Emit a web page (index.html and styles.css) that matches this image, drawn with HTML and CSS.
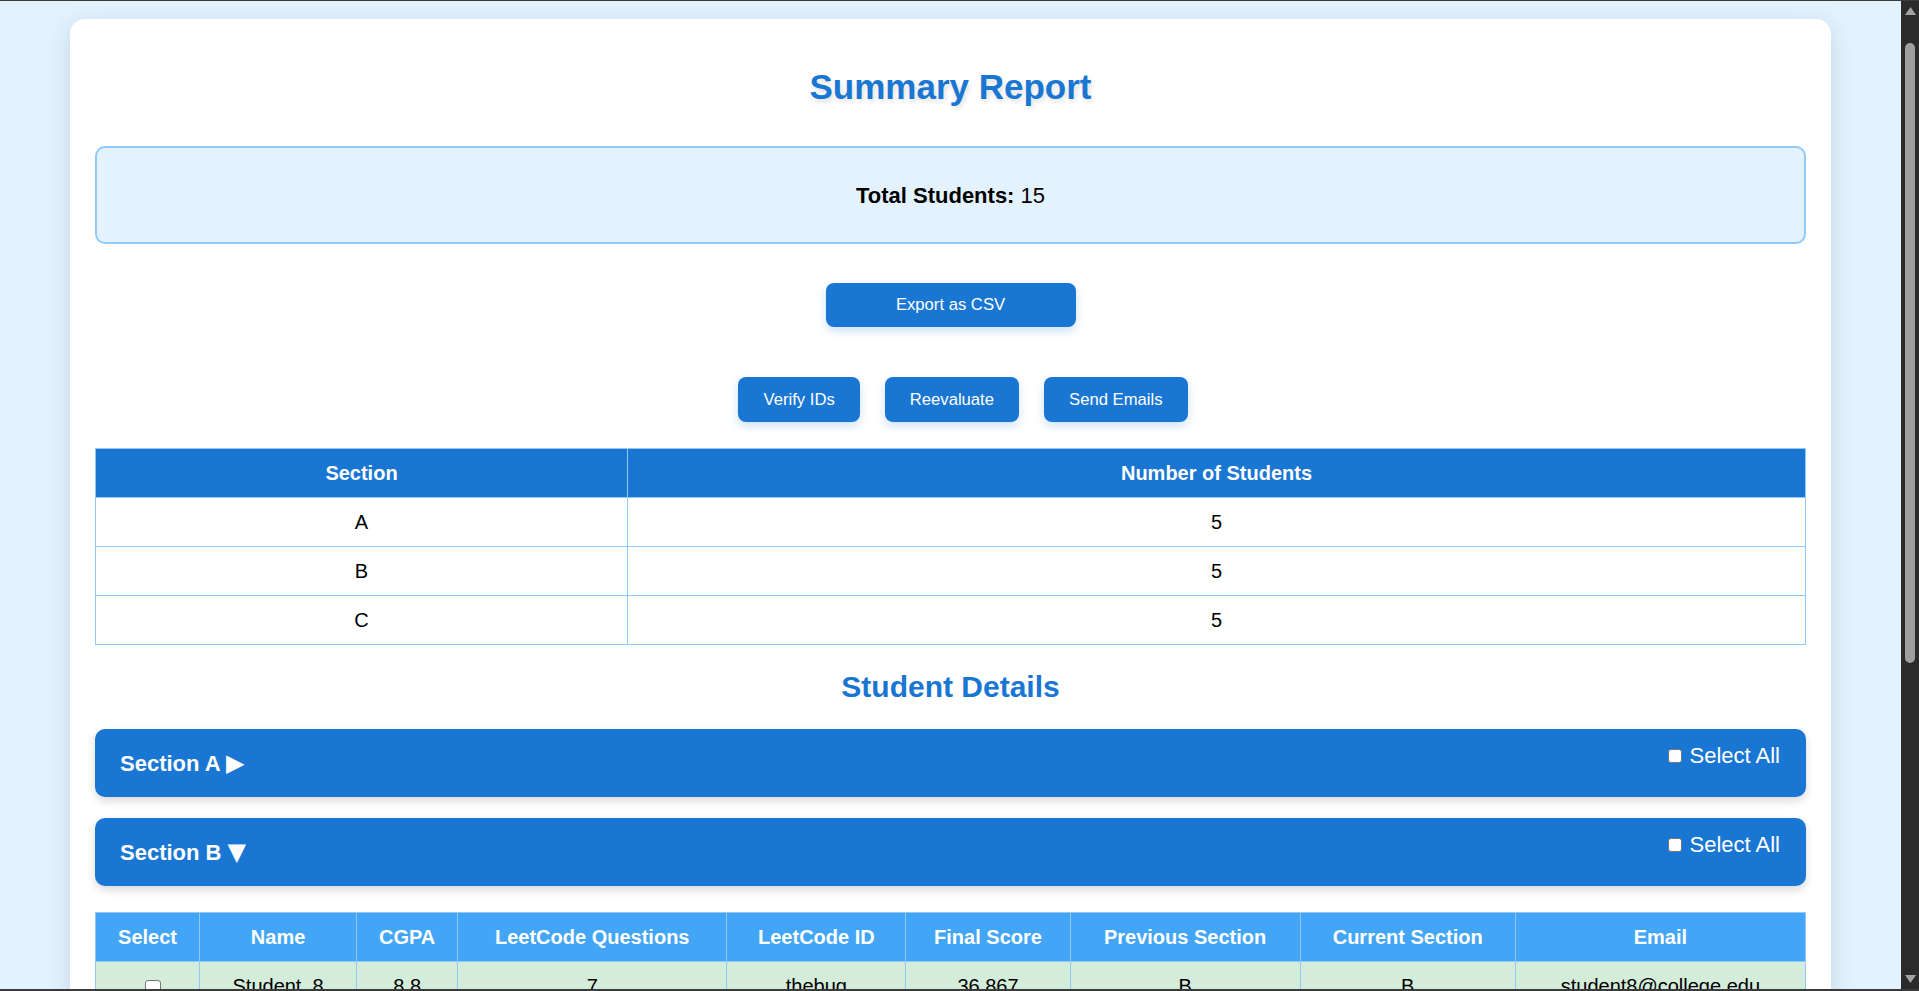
FILE: index.html
```html
<!DOCTYPE html>
<html lang="en">
<head>
<meta charset="utf-8">
<title>Summary Report</title>
<link rel="stylesheet" href="styles.css">
</head>
<body>
<div class="frame">
  <main class="viewport">
    <div class="card">
      <h1 class="title">Summary Report</h1>
      <div class="summary-box"><p><strong>Total Students:</strong> 15</p></div>
      <div class="export-row"><button class="btn btn-export">Export as CSV</button></div>
      <div class="action-row">
        <button class="btn btn-action">Verify IDs</button><button class="btn btn-action">Reevaluate</button><button class="btn btn-action">Send Emails</button>
      </div>
      <table class="section-table">
        <colgroup><col class="col-section"><col></colgroup>
        <thead><tr><th>Section</th><th>Number of Students</th></tr></thead>
        <tbody>
          <tr><td>A</td><td>5</td></tr>
          <tr><td>B</td><td>5</td></tr>
          <tr><td>C</td><td>5</td></tr>
        </tbody>
      </table>
      <h2 class="subtitle">Student Details</h2>
      <div class="section-bar">
        <h3 class="section-name">Section A <span class="caret">&#9654;</span></h3>
        <label class="select-all"><input type="checkbox" class="cb cb-all"> Select All</label>
      </div>
      <div class="section-bar">
        <h3 class="section-name">Section B <span class="caret">&#9660;</span></h3>
        <label class="select-all"><input type="checkbox" class="cb cb-all"> Select All</label>
      </div>
      <table class="student-table">
        <colgroup>
          <col class="w-select"><col class="w-name"><col class="w-cgpa"><col class="w-lcq"><col class="w-lcid"><col class="w-score"><col class="w-prev"><col class="w-cur"><col class="w-email">
        </colgroup>
        <thead>
          <tr><th>Select</th><th>Name</th><th>CGPA</th><th>LeetCode Questions</th><th>LeetCode ID</th><th>Final Score</th><th>Previous Section</th><th>Current Section</th><th>Email</th></tr>
        </thead>
        <tbody>
          <tr class="row-ok"><td><input type="checkbox" class="cb cb-row"></td><td>Student_8</td><td>8.8</td><td>7</td><td>thebug</td><td>36.867</td><td>B</td><td>B</td><td>student8@college.edu</td></tr>
          <tr class="row-ok"><td><input type="checkbox" class="cb cb-row"></td><td>Student_9</td><td>8.1</td><td>12</td><td>coder9</td><td>40.2</td><td>B</td><td>B</td><td>student9@college.edu</td></tr>
        </tbody>
      </table>
    </div>
  </main>
  <div class="scrollbar">
    <div class="sb-arrow"><svg width="11" height="8" viewBox="0 0 11 8"><polygon points="5.5,0 11,8 0,8" fill="#a3a3a3"/></svg></div>
    <div class="sb-thumb"></div>
    <div class="sb-space"></div>
    <div class="sb-arrow"><svg width="11" height="8" viewBox="0 0 11 8"><polygon points="0,0 11,0 5.5,8" fill="#a3a3a3"/></svg></div>
  </div>
</div>
</body>
</html>
```
FILE: styles.css
```css
html, body {
  margin: 0;
  padding: 0;
  height: 100%;
  overflow: hidden;
}

body {
  font-family: "Liberation Sans", Arial, sans-serif;
  background: #e3f2fd;
  color: #000;
}

.frame {
  display: flex;
  height: 991px;
  box-sizing: border-box;
  border-top: 1px solid #3a3a3a;
  border-bottom: 2px solid #3a3a3a;
}

.viewport {
  flex: 1;
  overflow: hidden;
  background: #e3f2fd;
}

.card {
  width: 1761px;
  box-sizing: border-box;
  margin: 18px auto 0;
  padding: 48px 25px 60px;
  background: #fff;
  border-radius: 15px;
  box-shadow: 0 5px 22px rgba(40, 70, 110, 0.16);
}

.title {
  margin: 0;
  font-size: 35px;
  line-height: 40px;
  font-weight: bold;
  color: #1976d2;
  text-align: center;
  text-shadow: 2px 3px 5px rgba(0, 0, 0, 0.12);
}

.summary-box {
  margin-top: 39px;
  height: 98px;
  box-sizing: border-box;
  display: flex;
  align-items: center;
  justify-content: center;
  background: #e3f2fd;
  border: 2px solid #90caf9;
  border-radius: 10px;
}

.summary-box p {
  margin: 0;
  font-size: 22px;
  line-height: 25px;
}

.export-row {
  margin-top: 39px;
  display: flex;
  justify-content: center;
}

.btn {
  font-family: "Liberation Sans", Arial, sans-serif;
  font-size: 16.67px;
  color: #fff;
  background: #1976d2;
  border: none;
  border-radius: 8px;
  box-shadow: 0 4px 10px rgba(25, 118, 210, 0.22);
  cursor: pointer;
}

.btn-export {
  width: 250px;
  height: 44px;
}

.action-row {
  margin-top: 50px;
  display: flex;
  justify-content: center;
}

.btn-action {
  height: 45px;
  padding: 0 25px;
  margin-left: 25px;
}

.section-table,
.student-table {
  width: 100%;
  border-collapse: collapse;
  table-layout: fixed;
  font-size: 20px;
}

.section-table {
  margin-top: 26px;
}

.section-table th,
.section-table td,
.student-table th,
.student-table td {
  border: 1px solid #90caf9;
  padding: 13px 8px;
  line-height: 22px;
  text-align: center;
}

.section-table th {
  background: #1976d2;
  color: #fff;
  font-weight: bold;
}

.section-table td {
  background: #fff;
}

.col-section { width: 532px; }

.subtitle {
  margin: 24px 0 25px;
  font-size: 30px;
  line-height: 35px;
  font-weight: bold;
  color: #1976d2;
  text-align: center;
}

.section-bar {
  height: 68px;
  box-sizing: border-box;
  padding: 0 26px 0 25px;
  display: flex;
  justify-content: space-between;
  align-items: flex-start;
  background: #1976d2;
  color: #fff;
  border-radius: 10px;
  box-shadow: 0 4px 10px rgba(0, 0, 0, 0.15);
}

.section-bar + .section-bar {
  margin-top: 21px;
}

.section-name {
  margin: 0;
  align-self: center;
  font-size: 22px;
  line-height: 25px;
  font-weight: bold;
}

.caret {
  font-family: "DejaVu Sans", sans-serif;
  font-size: 24px;
  line-height: 25px;
}

.select-all {
  margin-top: 14px;
  display: flex;
  align-items: center;
  gap: 8px;
  font-size: 22px;
  line-height: 25px;
}

.cb {
  appearance: none;
  -webkit-appearance: none;
  box-sizing: border-box;
  background: #fff;
  border: 1px solid #767676;
  border-radius: 3px;
}

.cb-all {
  width: 14px;
  height: 14px;
  margin: 0;
}

.student-table {
  margin-top: 26px;
}

.student-table th {
  background: #42a5f5;
  color: #fff;
  font-weight: bold;
  padding: 13px 4px;
}

.row-ok td {
  background: #d4ecda;
}

.cb-row {
  width: 16px;
  height: 16px;
  margin: 0 0 0 10px;
  vertical-align: middle;
}

.w-select { width: 104px; }
.w-name { width: 157px; }
.w-cgpa { width: 101px; }
.w-lcq { width: 269px; }
.w-lcid { width: 179px; }
.w-score { width: 164px; }
.w-prev { width: 230px; }
.w-cur { width: 215px; }
.w-email { width: 290px; }

.scrollbar {
  width: 18px;
  flex: none;
  display: flex;
  flex-direction: column;
  align-items: center;
  background: #2b2b2b;
}

.sb-arrow {
  height: 20px;
  width: 100%;
  display: flex;
  align-items: center;
  justify-content: center;
}

.sb-thumb {
  margin-top: 22px;
  width: 10px;
  height: 620px;
  border-radius: 5px;
  background: #9f9f9f;
}

.sb-space {
  flex: 1;
}
```
